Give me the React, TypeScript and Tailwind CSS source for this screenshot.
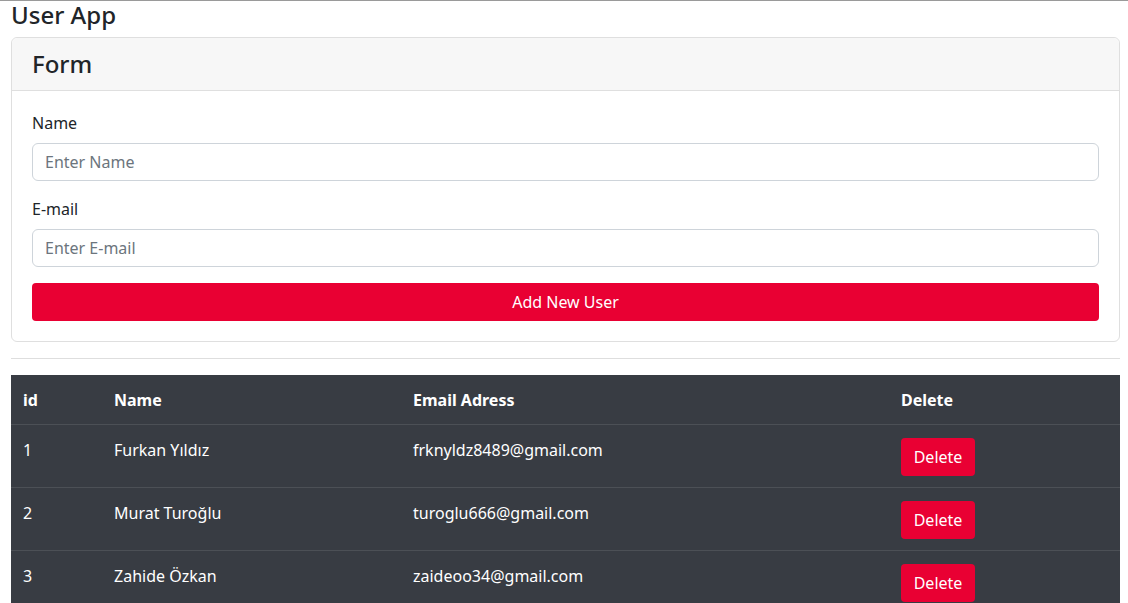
const users = [
  { id: 1, name: "Furkan Yıldız", email: "frknyldz8489@gmail.com" },
  { id: 2, name: "Murat Turoğlu", email: "turoglu666@gmail.com" },
  { id: 3, name: "Zahide Özkan", email: "zaideoo34@gmail.com" },
];

export default function App() {
  return (
    <div className="min-h-[603px] bg-white border-t border-[#9a9a9a] pl-[11px] pr-[8px] text-[#212529] font-['Noto_Sans',sans-serif]">
      <h1 className="text-[24px] leading-[27px] font-medium">User App</h1>

      {/* Form card */}
      <div className="mt-[9px] rounded-md border border-[#dfdfdf]">
        <div className="rounded-t-md border-b border-[#dfdfdf] bg-[#f7f7f7] px-5 py-3">
          <h3 className="text-[24px] leading-[28px] font-medium">Form</h3>
        </div>
        <form className="p-5">
          <div className="mb-4">
            <label htmlFor="name" className="mb-2 block text-base leading-6">Name</label>
            <input
              id="name"
              type="text"
              placeholder="Enter Name"
              className="block h-[38px] w-full rounded-md border border-[#ced4da] px-3 text-base placeholder:text-[#6c757d]"
            />
          </div>
          <div className="mb-4">
            <label htmlFor="email" className="mb-2 block text-base leading-6">E-mail</label>
            <input
              id="email"
              type="email"
              placeholder="Enter E-mail"
              className="block h-[38px] w-full rounded-md border border-[#ced4da] px-3 text-base placeholder:text-[#6c757d]"
            />
          </div>
          <button type="button" className="h-[38px] w-full rounded bg-[#e90033] text-base text-white">
            Add New User
          </button>
        </form>
      </div>

      <hr className="my-4 border-[#dedede]" />

      {/* Users table */}
      <table className="w-full border-collapse bg-[#383c43] text-left text-base text-white">
        <thead>
          <tr className="border-b border-[#4c5056]">
            <th className="w-[91px] px-3 pt-[13px] pb-3 font-bold leading-6">id</th>
            <th className="w-[299px] px-3 pt-[13px] pb-3 font-bold leading-6">Name</th>
            <th className="w-[488px] px-3 pt-[13px] pb-3 font-bold leading-6">Email Adress</th>
            <th className="px-3 pt-[13px] pb-3 font-bold leading-6">Delete</th>
          </tr>
        </thead>
        <tbody>
          {users.map((u) => (
            <tr key={u.id} className="border-b border-[#4c5056] align-top">
              <td className="px-3 pt-[13px] leading-6">{u.id}</td>
              <td className="px-3 pt-[13px] leading-6">{u.name}</td>
              <td className="px-3 pt-[13px] leading-6">{u.email}</td>
              <td className="px-3 pt-[13px] pb-[11px]">
                <button type="button" className="h-[38px] w-[74px] rounded bg-[#e90033] text-base text-white">
                  Delete
                </button>
              </td>
            </tr>
          ))}
        </tbody>
      </table>
    </div>
  );
}
